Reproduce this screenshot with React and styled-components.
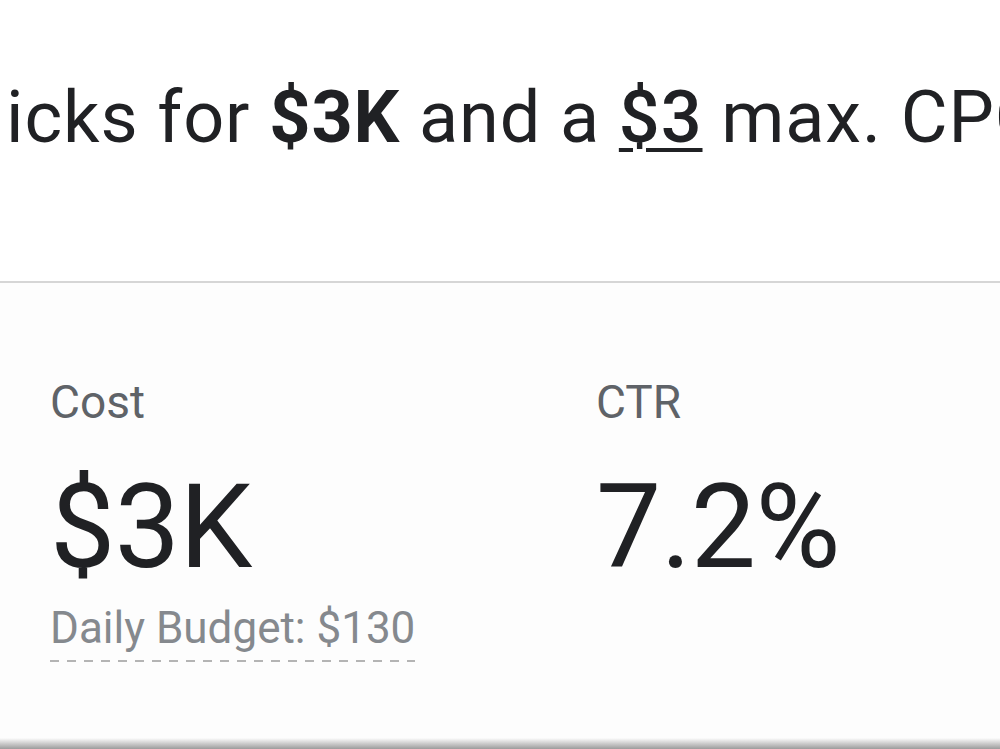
import React from "react";
import styled, { createGlobalStyle } from "styled-components";

const GlobalStyle = createGlobalStyle`
    html, body {
        margin: 0;
        padding: 0;
        background: #fff;
    }
    body {
        font-family: Roboto, "Liberation Sans", Arial, sans-serif;
    }
`

const Page = styled.div`
    width: 1000px;
    height: 749px;
    overflow: hidden;
    display: flex;
    flex-direction: column;
    background: #fff;
`

const Summary = styled.div`
    height: 281px;
    flex-shrink: 0;
    padding: 82px 0 0 6px;
    box-sizing: border-box;
    font-size: 72px;
    line-height: 72px;
    letter-spacing: 0.9px;
    color: #202124;
    white-space: nowrap;
    overflow: hidden;
`

const Strong = styled.b`
    font-weight: 700;
`

const Underlined = styled.span`
    font-weight: 500;
    text-decoration: underline;
    text-decoration-thickness: 4px;
    text-underline-offset: 6px;
    text-decoration-skip-ink: auto;
`

const Stats = styled.div`
    flex: 1;
    display: grid;
    grid-template-columns: 546px 1fr;
    align-items: start;
    padding: 96px 0 0 50px;
    border-top: 2px solid #d6d6d6;
    background: #fdfdfd;
`

const Stat = styled.div`
    display: flex;
    flex-direction: column;
    align-items: flex-start;
`

const Label = styled.div`
    font-size: 46px;
    line-height: 46px;
    color: #5f6368;
`

const Value = styled.div`
    margin-top: 44px;
    font-size: 116px;
    line-height: 116px;
    color: #202124;
    letter-spacing: -0.5px;
`

const Note = styled.div`
    margin-top: 21px;
    padding-bottom: 12px;
    font-size: 44px;
    line-height: 44px;
    color: #85898e;
    background-image: repeating-linear-gradient(to right, #b4b4b4 0 9px, transparent 9px 17px);
    background-size: 100% 2px;
    background-repeat: no-repeat;
    background-position: 0 100%;
`

const Edge = styled.div`
    height: 11px;
    flex-shrink: 0;
    background: linear-gradient(to bottom, #fdfdfd, #d6d6d6 40%, #9c9c9c);
`

const App = () => {
    return (
        <Page>
            <GlobalStyle />
            <Summary>
                icks for <Strong>$3K</Strong> and a <Underlined>$3</Underlined> max. CPC
            </Summary>
            <Stats>
                <Stat>
                    <Label>Cost</Label>
                    <Value>$3K</Value>
                    <Note>Daily Budget: $130</Note>
                </Stat>
                <Stat>
                    <Label>CTR</Label>
                    <Value>7.2%</Value>
                </Stat>
            </Stats>
            <Edge />
        </Page>
    )
}

export default App;
